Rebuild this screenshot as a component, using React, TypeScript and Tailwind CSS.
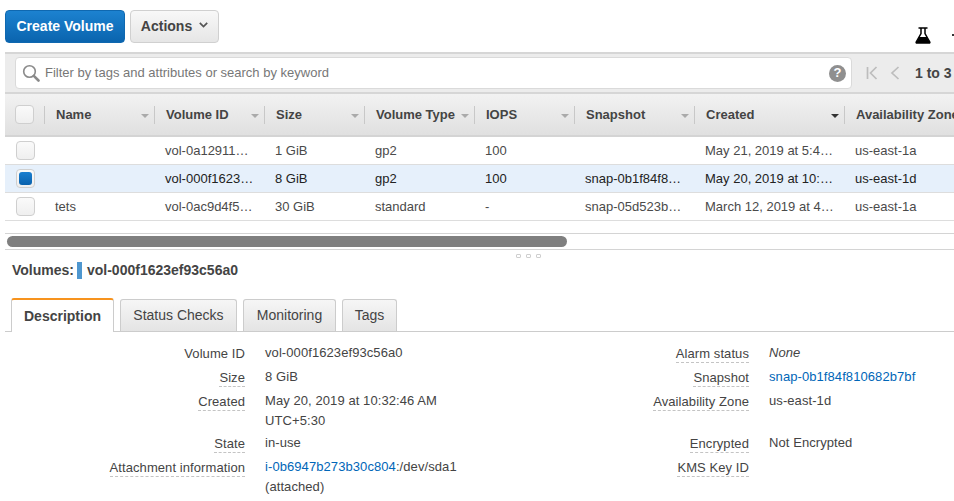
import React from "react";

const cols = [
  { label: "", w: "w-[40px]" },
  { label: "Name", w: "w-[110px]" },
  { label: "Volume ID", w: "w-[110px]" },
  { label: "Size", w: "w-[100px]" },
  { label: "Volume Type", w: "w-[110px]" },
  { label: "IOPS", w: "w-[100px]" },
  { label: "Snapshot", w: "w-[120px]" },
  { label: "Created", w: "w-[150px]", dark: true },
  { label: "Availability Zone", w: "w-[109px]", last: true },
];

const rows = [
  { name: "", id: "vol-0a12911…", size: "1 GiB", type: "gp2", iops: "100", snap: "", created: "May 21, 2019 at 5:4…", az: "us-east-1a" },
  { name: "", id: "vol-000f1623…", size: "8 GiB", type: "gp2", iops: "100", snap: "snap-0b1f84f8…", created: "May 20, 2019 at 10:…", az: "us-east-1d", selected: true },
  { name: "tets", id: "vol-0ac9d4f5…", size: "30 GiB", type: "standard", iops: "-", snap: "snap-05d523b…", created: "March 12, 2019 at 4…", az: "us-east-1a" },
];

function Checkbox({ checked, className = "" }: { checked?: boolean; className?: string }) {
  return (
    <span className={`flex h-[19px] w-[19px] items-center justify-center rounded-[4px] border border-[#cfcfcf] bg-gradient-to-b from-[#fafafa] to-[#efefef] ${className}`}>
      {checked && <span className="h-[13px] w-[13px] rounded-[3px] bg-gradient-to-b from-[#1a7fd0] to-[#0a62ad]" />}
    </span>
  );
}

function Label({ text, dashed = true }: { text: string; dashed?: boolean }) {
  return (
    <div className="flex w-[245px] shrink-0 justify-end">
      <span className={`h-[18px] leading-[17px] text-[#444] ${dashed ? "border-b border-dashed border-[#c4c4c4]" : ""}`}>{text}</span>
    </div>
  );
}

function DetailRow({ label, dashed, h, children }: { label: string; dashed?: boolean; h: string; children?: React.ReactNode }) {
  return (
    <div className={`flex gap-[20px] ${h}`}>
      <Label text={label} dashed={dashed} />
      <div className="leading-[20px] text-[#444] -mt-[2px]">{children}</div>
    </div>
  );
}

function Tab({ text, active, w }: { text: string; active?: boolean; w: string }) {
  if (active) {
    return (
      <div className={`${w} z-10 -mb-px flex h-[34px] items-center justify-center rounded-t-[3px] border-x border-t-2 border-x-[#ccc] border-t-[#f7931e] bg-white text-[14px] font-bold text-[#444]`}>
        {text}
      </div>
    );
  }
  return (
    <div className={`${w} flex h-[32px] items-center justify-center rounded-t-[3px] border border-b-0 border-[#ccc] bg-gradient-to-b from-[#f6f6f6] to-[#e4e4e4] text-[14px] text-[#444]`}>
      {text}
    </div>
  );
}

export default function App() {
  return (
    <div className="h-[501px] w-[954px] overflow-hidden bg-white text-[13px] text-[#444] [font-family:'Liberation_Sans',Arial,sans-serif]">
      <div className="relative flex h-[52px] items-start gap-[5px] pl-[5px] pt-[10px]">
        <button className="flex h-[33px] w-[120px] items-center justify-center rounded-[4px] border border-[#0f68b0] bg-gradient-to-b from-[#1c82d0] to-[#0a64ae] text-[14px] font-bold text-white">
          Create Volume
        </button>
        <button className="flex h-[33px] w-[89px] items-center justify-center gap-[7px] rounded-[4px] border border-[#d0d0d0] bg-gradient-to-b from-[#f8f8f8] to-[#e6e6e6] text-[14px] font-bold text-[#444]">
          Actions
          <svg width="9" height="6" viewBox="0 0 9 6" className="-mt-[4px]"><path d="M0.8 0.8 L4.5 4.6 L8.2 0.8" fill="none" stroke="#555" strokeWidth="1.7" /></svg>
        </button>
        <svg width="16" height="17" viewBox="0 0 16 17" className="absolute left-[915px] top-[27px]">
          <path d="M3.5 1 H12.5 M6 1 V6.5 L1.2 15 Q0.8 16 2 16 H14 Q15.2 16 14.8 15 L10 6.5 V1" fill="none" stroke="#000" strokeWidth="1.5" />
          <path d="M4 10 H12 L15 16 H1 Z" fill="#000" />
        </svg>
        <span className="absolute left-[952px] top-[34px] h-[2px] w-[2px] bg-[#333]" />
      </div>

      <div className="ml-[5px] w-[949px]">
        <div className="flex h-[42px] items-center border-y-[2px] border-y-[#d6d6d6] bg-[#ececec] pl-[10px]">
          <div className="flex h-[32px] w-[837px] items-center rounded-[4px] border border-[#dadada] bg-white pl-[6px] pr-[5px]">
            <svg width="18" height="18" viewBox="0 0 18 18" className="shrink-0">
              <circle cx="7.5" cy="7.5" r="5.8" fill="none" stroke="#8a8a8a" strokeWidth="1.6" />
              <path d="M11.8 11.8 L16.5 16.5" stroke="#8a8a8a" strokeWidth="2.6" strokeLinecap="round" />
            </svg>
            <span className="ml-[5px] flex-1 text-[13px] text-[#777]">Filter by tags and attributes or search by keyword</span>
            <span className="flex h-[17px] w-[17px] items-center justify-center rounded-full bg-[#8f8f8f] text-[13px] font-bold text-white">?</span>
          </div>
          <svg width="12" height="14" viewBox="0 0 12 14" className="ml-[14px] shrink-0">
            <path d="M1.5 1 V13 M10.5 1 L4.5 7 L10.5 13" fill="none" stroke="#bdbdbd" strokeWidth="1.7" />
          </svg>
          <svg width="10" height="14" viewBox="0 0 10 14" className="ml-[12px] shrink-0">
            <path d="M8.5 1 L2 7 L8.5 13" fill="none" stroke="#bdbdbd" strokeWidth="1.7" />
          </svg>
          <span className="ml-[15px] whitespace-nowrap text-[14px] font-bold text-[#444]">1 to 3</span>
        </div>

        <div className="flex h-[43px] border-b-[2px] border-b-[#d4d4d4] bg-gradient-to-b from-[#f2f2f2] to-[#e0e0e0]">
          {cols.map((c, i) => (
            <div key={i} className={`${c.w} relative flex shrink-0 items-center overflow-hidden whitespace-nowrap`}>
              {i === 0 ? (
                <Checkbox className="ml-[10px]" />
              ) : (
                <span className="ml-[11px] font-bold text-[#444]">{c.label}</span>
              )}
              {i > 0 && !c.last && (
                <span className={`absolute right-[6px] top-[20px] h-0 w-0 border-x-[4px] border-t-[4px] border-x-transparent ${c.dark ? "border-t-[#333]" : "border-t-[#aaa]"}`} />
              )}
              {!c.last && <span className="absolute right-0 top-[12px] h-[18px] w-px bg-[#c8c8c8]" />}
            </div>
          ))}
        </div>

        {rows.map((r) => (
          <div key={r.id} className={`flex h-[28px] items-center border-b border-[#dddddd] whitespace-nowrap ${r.selected ? "bg-[#e6f0fb] text-[#222]" : "bg-white text-[#4a4a4a]"}`}>
            <div className="w-[40px] shrink-0"><Checkbox checked={r.selected} className="ml-[11px]" /></div>
            <div className="w-[110px] shrink-0 pl-[10px]">{r.name}</div>
            <div className="w-[110px] shrink-0 pl-[10px]">{r.id}</div>
            <div className="w-[100px] shrink-0 pl-[10px]">{r.size}</div>
            <div className="w-[110px] shrink-0 pl-[10px]">{r.type}</div>
            <div className="w-[100px] shrink-0 pl-[10px]">{r.iops}</div>
            <div className="w-[120px] shrink-0 pl-[10px]">{r.snap}</div>
            <div className="w-[150px] shrink-0 pl-[10px]">{r.created}</div>
            <div className="w-[109px] shrink-0 pl-[10px]">{r.az}</div>
          </div>
        ))}

        <div className="mt-[12px] flex h-[17px] items-center border-y border-[#d4d4d4] pl-[2px]">
          <div className="h-[11px] w-[560px] rounded-full bg-[#7f7f7f]" />
        </div>
      </div>

      <div className="flex h-[10px] justify-center gap-[5px] pl-[102px] pt-[4px]">
        <span className="h-[4px] w-[5px] rounded-[1px] border border-[#cfcfcf]" />
        <span className="h-[4px] w-[5px] rounded-[1px] border border-[#cfcfcf]" />
        <span className="h-[4px] w-[5px] rounded-[1px] border border-[#cfcfcf]" />
      </div>

      <div className="flex h-[21px] items-center pl-[12px] text-[14px] font-bold text-[#444]">
        Volumes:
        <span className="ml-[3px] h-[17px] w-[5px] bg-[#4f97cf]" />
        <span className="ml-[5px]">vol-000f1623ef93c56a0</span>
      </div>

      <div className="ml-[5px] mt-[17px] flex items-end gap-[6px] border-b border-[#cccccc] pl-[6px]">
        <Tab text="Description" active w="w-[103px]" />
        <Tab text="Status Checks" w="w-[117px]" />
        <Tab text="Monitoring" w="w-[93px]" />
        <Tab text="Tags" w="w-[55px]" />
      </div>

      <div className="flex pt-[13px] tracking-[0.08px]">
        <div className="flex w-[504px] shrink-0 flex-col">
          <DetailRow label="Volume ID" dashed={false} h="h-[24px]">vol-000f1623ef93c56a0</DetailRow>
          <DetailRow label="Size" h="h-[24px]">8 GiB</DetailRow>
          <DetailRow label="Created" h="h-[42px]">May 20, 2019 at 10:32:46 AM<br />UTC+5:30</DetailRow>
          <DetailRow label="State" h="h-[24px]">in-use</DetailRow>
          <DetailRow label="Attachment information" h="h-[40px]">
            <span className="text-[#0066b8]">i-0b6947b273b30c804</span>:/dev/sda1<br />(attached)
          </DetailRow>
        </div>
        <div className="flex w-[450px] shrink-0 flex-col">
          <DetailRow label="Alarm status" h="h-[24px]"><em>None</em></DetailRow>
          <DetailRow label="Snapshot" h="h-[24px]"><span className="text-[#0066b8]">snap-0b1f84f810682b7bf</span></DetailRow>
          <DetailRow label="Availability Zone" h="h-[42px]">us-east-1d</DetailRow>
          <DetailRow label="Encrypted" h="h-[24px]">Not Encrypted</DetailRow>
          <DetailRow label="KMS Key ID" h="h-[24px]" />
        </div>
      </div>
    </div>
  );
}
